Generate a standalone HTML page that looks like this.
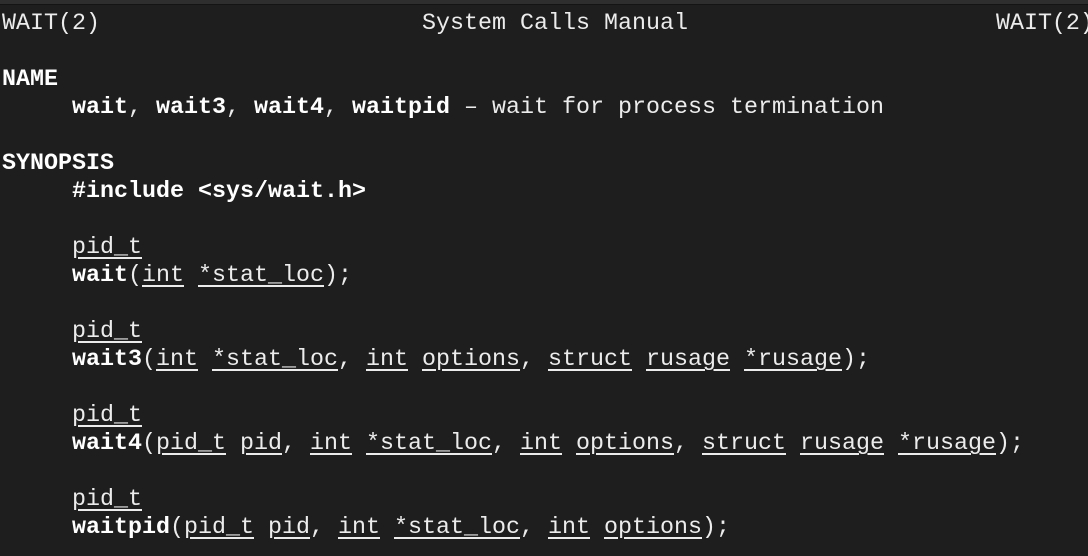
<!DOCTYPE html>
<html><head><meta charset="utf-8"><style>
html,body{margin:0;padding:0;background:#1e1e1e;width:1088px;height:556px;overflow:hidden}
.top{position:absolute;left:0;top:0;width:1088px;height:4px;background:#2e2e2e;border-bottom:1px solid #141414}
pre{position:absolute;left:2px;top:10px;margin:0;font-family:"Liberation Mono",monospace;font-size:23.33px;line-height:28px;color:#ececec;white-space:pre}
b{font-weight:bold;color:#fff}
u{text-decoration:underline;text-decoration-thickness:2px;text-underline-offset:4px}
</style></head><body><div class="top"></div>
<pre>WAIT(2)                       System Calls Manual                      WAIT(2)

<b>NAME</b>
     <b>wait</b>, <b>wait3</b>, <b>wait4</b>, <b>waitpid</b> – wait for process termination

<b>SYNOPSIS</b>
     <b>#include &lt;sys/wait.h&gt;</b>

     <u>pid_t</u>
     <b>wait</b>(<u>int</u> <u>*stat_loc</u>);

     <u>pid_t</u>
     <b>wait3</b>(<u>int</u> <u>*stat_loc</u>, <u>int</u> <u>options</u>, <u>struct</u> <u>rusage</u> <u>*rusage</u>);

     <u>pid_t</u>
     <b>wait4</b>(<u>pid_t</u> <u>pid</u>, <u>int</u> <u>*stat_loc</u>, <u>int</u> <u>options</u>, <u>struct</u> <u>rusage</u> <u>*rusage</u>);

     <u>pid_t</u>
     <b>waitpid</b>(<u>pid_t</u> <u>pid</u>, <u>int</u> <u>*stat_loc</u>, <u>int</u> <u>options</u>);
</pre></body></html>
